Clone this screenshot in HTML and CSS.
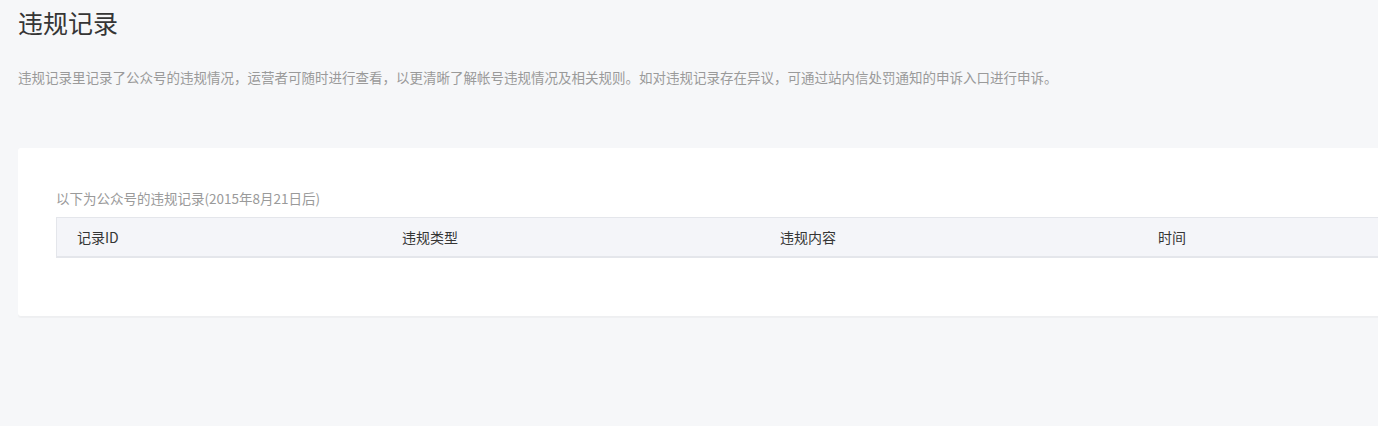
FILE: index.html
```html
<!DOCTYPE html>
<html lang="zh-CN">
<head>
  <meta charset="UTF-8">
  <title>违规记录</title>
  <link rel="stylesheet" href="styles.css">
</head>
<body>

  <div class="page">
    <h1 class="page-title">违规记录</h1>
    <p class="page-desc">违规记录里记录了公众号的违规情况，运营者可随时进行查看，以更清晰了解帐号违规情况及相关规则。如对违规记录存在异议，可通过站内信处罚通知的申诉入口进行申诉。</p>

    <!-- 违规记录列表 -->
    <div class="card">
      <p class="table-caption">以下为公众号的违规记录(2015年8月21日后)</p>
      <table class="record-table">
        <thead>
          <tr>
            <th class="col-id">记录ID</th>
            <th class="col-type">违规类型</th>
            <th class="col-content">违规内容</th>
            <th class="col-time">时间</th>
          </tr>
        </thead>
        <tbody></tbody>
      </table>
    </div>
  </div>

</body>
</html>
```

FILE: styles.css
```css
html, body {
  margin: 0;
  padding: 0;
}

body {
  font-family: "Microsoft YaHei", "Noto Sans CJK SC", sans-serif;
  background-color: #f6f7f9;
  color: #353535;
  overflow: hidden;
  height: 426px;
}

.page {
  width: 1560px;
  padding: 0 0 0 18px;
}

.page-title {
  margin: 0;
  padding-top: 4px;
  font-size: 25px;
  font-weight: normal;
  line-height: 36px;
  color: #353535;
}

.page-desc {
  margin: 27px 0 0;
  font-size: 13.5px;
  line-height: 20px;
  color: #9a9a9a;
}

.card {
  margin-top: 61px;
  background-color: white;
  border-radius: 3px;
  box-shadow: 0 2px 1px rgba(0, 0, 0, 0.03);
  padding: 40px 0 58px 38px;
}

.table-caption {
  margin: 0 0 9px;
  font-size: 13.5px;
  line-height: 20px;
  color: #9a9a9a;
}

.record-table {
  border-collapse: collapse;
  width: 1459px;
  table-layout: fixed;
}

.record-table th {
  background-color: #f4f5f9;
  border-top: 1px solid #e4e6eb;
  border-bottom: 2px solid #e4e6eb;
  height: 38px;
  padding: 0 0 0 20px;
  text-align: left;
  font-size: 14px;
  font-weight: normal;
  color: #353535;
}

.record-table th.col-id {
  border-left: 1px solid #e4e6eb;
  width: 325px;
}

.record-table th.col-type,
.record-table th.col-content,
.record-table th.col-time {
  width: 378px;
  padding-left: 0;
}
```
